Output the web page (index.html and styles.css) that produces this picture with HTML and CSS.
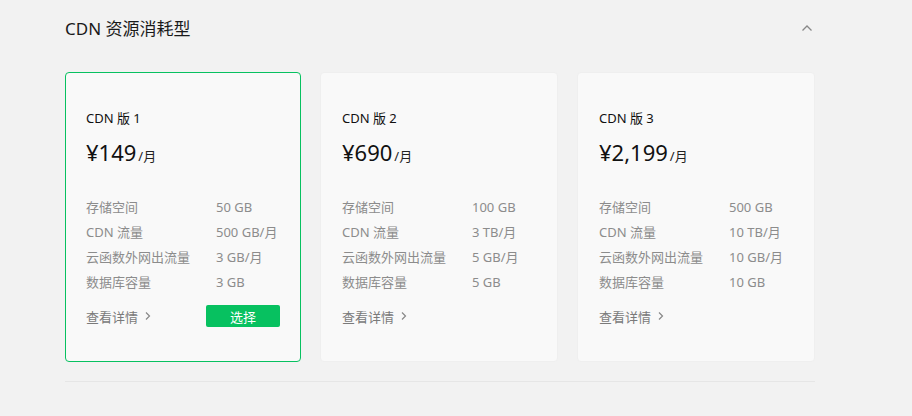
FILE: index.html
```html
<!DOCTYPE html>
<html lang="zh-CN">
<head>
<meta charset="utf-8">
<link rel="stylesheet" href="styles.css">
</head>
<body>
<div class="section">
  <div class="header">
    <div class="title">CDN 资源消耗型</div>
    <svg class="chev" width="12" height="8" viewBox="0 0 12 8"><path d="M1.5 6.5 L6 2 L10.5 6.5" fill="none" stroke="#888" stroke-width="1.3"/></svg>
  </div>
  <div class="cards">
    <div class="card selected">
      <div class="name">CDN 版 1</div>
      <div class="price"><span class="amt">¥149</span><span class="unit">/月</span></div>
      <div class="specs">
        <div class="row"><span class="k">存储空间</span><span class="v">50 GB</span></div>
        <div class="row"><span class="k">CDN 流量</span><span class="v">500 GB/月</span></div>
        <div class="row"><span class="k">云函数外网出流量</span><span class="v">3 GB/月</span></div>
        <div class="row"><span class="k">数据库容量</span><span class="v">3 GB</span></div>
      </div>
      <div class="foot">
        <span class="more">查看详情<svg class="arr" width="8" height="10" viewBox="0 0 8 10"><path d="M2 1.5 L5.5 5 L2 8.5" fill="none" stroke="#888" stroke-width="1.2"/></svg></span>
        <button class="btn">选择</button>
      </div>
    </div>
    <div class="card">
      <div class="name">CDN 版 2</div>
      <div class="price"><span class="amt">¥690</span><span class="unit">/月</span></div>
      <div class="specs">
        <div class="row"><span class="k">存储空间</span><span class="v">100 GB</span></div>
        <div class="row"><span class="k">CDN 流量</span><span class="v">3 TB/月</span></div>
        <div class="row"><span class="k">云函数外网出流量</span><span class="v">5 GB/月</span></div>
        <div class="row"><span class="k">数据库容量</span><span class="v">5 GB</span></div>
      </div>
      <div class="foot">
        <span class="more">查看详情<svg class="arr" width="8" height="10" viewBox="0 0 8 10"><path d="M2 1.5 L5.5 5 L2 8.5" fill="none" stroke="#888" stroke-width="1.2"/></svg></span>
      </div>
    </div>
    <div class="card">
      <div class="name">CDN 版 3</div>
      <div class="price"><span class="amt">¥2,199</span><span class="unit">/月</span></div>
      <div class="specs">
        <div class="row"><span class="k">存储空间</span><span class="v">500 GB</span></div>
        <div class="row"><span class="k">CDN 流量</span><span class="v">10 TB/月</span></div>
        <div class="row"><span class="k">云函数外网出流量</span><span class="v">10 GB/月</span></div>
        <div class="row"><span class="k">数据库容量</span><span class="v">10 GB</span></div>
      </div>
      <div class="foot">
        <span class="more">查看详情<svg class="arr" width="8" height="10" viewBox="0 0 8 10"><path d="M2 1.5 L5.5 5 L2 8.5" fill="none" stroke="#888" stroke-width="1.2"/></svg></span>
      </div>
    </div>
  </div>
  <div class="divider"></div>
</div>
</body>
</html>
```
FILE: styles.css
```css
html, body {
  margin: 0;
  padding: 0;
  background: #f2f2f2;
  font-family: "Noto Sans", "Noto Sans CJK SC", sans-serif;
  color: #191919;
}
.section {
  width: 750px;
  margin-left: 65px;
}
.header {
  height: 58px;
  display: flex;
  align-items: center;
  justify-content: space-between;
  padding-right: 2px;
}
.title {
  font-size: 17px;
  line-height: 24px;
  color: #1a1a1a;
  margin-top: -1px;
}
.chev {
  margin-right: 0;
  margin-top: -2px;
}
.cards {
  margin-top: 14px;
  display: flex;
  gap: 19px;
}
.card {
  width: 237px;
  height: 290px;
  box-sizing: border-box;
  background: #f9f9f9;
  border: 1px solid #efefef;
  border-radius: 4px;
  padding: 35px 20px 0 21px;
  display: flex;
  flex-direction: column;
}
.card + .card { width: 238px; }
.card.selected {
  border-color: #07c160;
  width: 236px;
  padding-left: 20px;
}
.name {
  font-size: 13px;
  line-height: 20px;
  color: #111;
}
.price {
  margin-top: 9px;
  line-height: 30px;
  display: flex;
  align-items: baseline;
}
.amt {
  font-size: 22px;
  color: #111;
}
.unit {
  font-size: 13px;
  margin-left: 2px;
  color: #222;
}
.specs {
  margin-top: 24px;
}
.row {
  display: flex;
  font-size: 13px;
  line-height: 25px;
  color: #8c8c8c;
}
.k { width: 130px; flex: none; }
.foot {
  margin-top: 10px;
  height: 22px;
  display: flex;
  align-items: center;
  justify-content: space-between;
}
.more {
  font-size: 13px;
  color: #7a7a7a;
  display: flex;
  align-items: center;
}
.arr { margin-left: 6px; }
.btn {
  width: 74px;
  height: 22px;
  border: none;
  border-radius: 2px;
  background: #07c160;
  color: #fff;
  font-family: inherit;
  font-size: 13px;
  padding: 0;
}
.divider {
  margin-top: 19px;
  height: 1px;
  background: #e6e6e6;
}
```
